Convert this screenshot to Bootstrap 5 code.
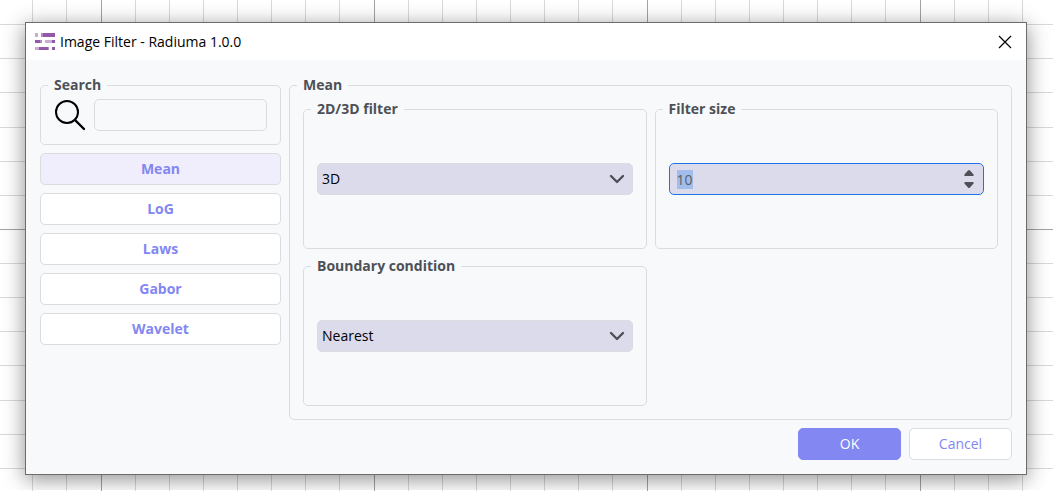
<!DOCTYPE html>
<html lang="en">
<head>
<meta charset="utf-8">
<meta name="viewport" content="width=device-width, initial-scale=1">
<title>Image Filter - Radiuma 1.0.0</title>
<link href="https://cdn.jsdelivr.net/npm/bootstrap@5.3.0/dist/css/bootstrap.min.css" rel="stylesheet">
<style>
  :root { --line: #dadce0; --panel: #f8f9fb; --accent: #8287f2; --ink: #4d5157; --field: #dcdbec; }
  body {
    font: 14px/20px "Open Sans", "Noto Sans", sans-serif;
    color: #000;
    background-color: #fff;
    /* canvas grid: a dark line every eight cells */
    background-image:
      linear-gradient(to right, #a3a3a3 1px, transparent 1px),
      linear-gradient(to bottom, #a3a3a3 1px, transparent 1px),
      repeating-linear-gradient(to right, transparent 0 33px, #d9d9d9 33px 34px),
      repeating-linear-gradient(to bottom, transparent 0 33px, #d9d9d9 33px 34px);
    background-size: 273px 273px;
    background-position: 101px 0, 0 229px, 68px 0, 0 94px;
  }
  .desk { padding: 22px 26px 15px 25px; }
  .dialog-win {
    background: var(--panel);
    border: 1px solid #6c6c6e;
    box-shadow: 0 4px 20px rgba(0, 0, 0, .45);
  }
  .title-strip { height: 37px; padding: 0 14px 0 9px; background: #fff; }
  .title-strip h1 { font-size: 14px; line-height: 20px; font-weight: 400; padding-left: 5px; }
  .close-btn { width: 14px; height: 14px; }
  .dialog-main { padding: 15px 14px 14px; }
  .side { flex: 0 0 241px; }
  .group {
    min-width: 0;
    border: 1px solid var(--line);
    border-radius: 5px;
    padding: 4px 13px 13px;
  }
  .group > legend {
    float: none;
    width: auto;
    margin: 0 0 0 -6px;
    padding: 0 6px;
    font-size: 14px;
    line-height: 20px;
    font-weight: 700;
    color: var(--ink);
  }
  .settings { display: grid; grid-template-columns: 1fr 1fr; gap: 7px 8px; }
  .slot { min-height: 112px; }
  .btn {
    --bs-btn-font-size: 14px;
    --bs-btn-line-height: 20px;
    --bs-btn-padding-y: 5px;
    --bs-btn-border-radius: 5px;
  }
  .btn-plain, .btn-accent { --bs-btn-color: var(--accent); --bs-btn-bg: #fff; --bs-btn-border-color: var(--line);
    --bs-btn-hover-color: var(--accent); --bs-btn-hover-bg: #f0eefd; --bs-btn-hover-border-color: var(--line);
    --bs-btn-active-color: var(--accent); --bs-btn-active-bg: #f0eefd; --bs-btn-active-border-color: var(--line); }
  .btn-accent { --bs-btn-color: #fff; --bs-btn-bg: var(--accent); --bs-btn-border-color: var(--accent);
    --bs-btn-hover-color: #fff; --bs-btn-hover-bg: #7378e8; --bs-btn-hover-border-color: #7378e8; }
  .side .btn { font-weight: 700; }
  .foot .btn { width: 103px; }
  .form-control, .form-select {
    height: 32px;
    font-size: 14px;
    line-height: 20px;
    border-color: var(--line);
    border-radius: 5px;
    padding: 5px 7px;
    background-color: var(--panel);
    color: var(--ink);
  }
  .form-select {
    padding-left: 4px;
    color: #000;
    background-color: var(--field);
    background-image: url("data:image/svg+xml,%3Csvg xmlns='http://www.w3.org/2000/svg' viewBox='0 0 16 16'%3E%3Cpath fill='none' stroke='%234d5157' stroke-width='2.400' stroke-linecap='round' stroke-linejoin='round' d='M2 5l6 6 6-6'/%3E%3C/svg%3E");
    background-size: 16px 16px;
    background-position: right 7px center;
  }
  .size-input, .size-input:focus {
    background-color: var(--field);
    border-color: #1a73e8;
    color: #5c6066;
    box-shadow: none;
    appearance: textfield;
  }
  .size-input::-webkit-inner-spin-button { appearance: none; margin: 0; }
  .size-input::selection { background: #a0bdec; color: #5c6066; }
  .steps { width: 10px; right: 10px; }
  .steps button { height: 12px; }
</style>
</head>
<body>
<div class="desk">
  <div class="dialog-win" role="dialog" aria-labelledby="win-title">
    <header class="title-strip d-flex align-items-center">
      <svg width="20" height="18" viewBox="0 0 20 18" aria-hidden="true">
        <g fill="#9359a8"><path d="M7 0h13v4H7zM0 7h7v3H0zM17 7h3v3h-3zM3 14h11v3H3zM17 14h3v3h-3z"/></g>
        <g fill="#c9add4"><path d="M0 0h3v4H0zM10 7h7v3h-7zM0 14h4v3H0z"/></g>
        <g fill="#b48cc3"><path d="M6 0h2v4H6zM5 7h2v3H5zM13 14h1v3h-1z"/></g>
      </svg>
      <h1 id="win-title" class="mb-0 flex-grow-1">Image Filter - Radiuma 1.0.0</h1>
      <button type="button" class="close-btn d-flex border-0 bg-transparent p-0" aria-label="Close">
        <svg width="14" height="14" viewBox="0 0 14 14"><path d="M1 1l12 12M13 1L1 13" stroke="#000" stroke-width="1.2"/></svg>
      </button>
    </header>
    <form class="dialog-main" onsubmit="return false">
      <div class="d-flex gap-2">
        <div class="side d-flex flex-column gap-2">
          <fieldset class="group">
            <legend>Search</legend>
            <div class="d-flex align-items-center gap-2">
              <label for="search" class="d-flex flex-shrink-0" aria-label="Search">
                <svg width="32" height="32" viewBox="0 0 32 32" fill="none" stroke="#000">
                  <circle cx="13" cy="13" r="11" stroke-width="2"/>
                  <path d="M21 21l9 9" stroke-width="2.4" stroke-linecap="round"/>
                </svg>
              </label>
              <input id="search" type="text" class="form-control">
            </div>
          </fieldset>
          <button type="button" class="btn btn-plain active" aria-pressed="true">Mean</button>
          <button type="button" class="btn btn-plain">LoG</button>
          <button type="button" class="btn btn-plain">Laws</button>
          <button type="button" class="btn btn-plain">Gabor</button>
          <button type="button" class="btn btn-plain">Wavelet</button>
        </div>
        <fieldset class="group flex-grow-1">
          <legend>Mean</legend>
          <div class="settings">
            <fieldset class="group">
              <legend>2D/3D filter</legend>
              <div class="slot d-flex align-items-center">
                <select class="form-select" aria-label="2D/3D filter"><option>3D</option><option>2D</option></select>
              </div>
            </fieldset>
            <fieldset class="group">
              <legend>Filter size</legend>
              <div class="slot d-flex align-items-center">
                <div class="position-relative w-100">
                  <input id="size" type="number" class="form-control size-input" value="10" aria-label="Filter size">
                  <div class="steps position-absolute top-0 bottom-0 d-flex flex-column justify-content-center">
                    <button type="button" class="d-flex align-items-center border-0 bg-transparent p-0" aria-label="Increase" onclick="size.stepUp()">
                      <svg width="10" height="6" viewBox="0 0 10 6"><path d="M5 0q.6 0 1 .5L9.600 4.500Q10 6 9 6H1Q0 6 .4 4.500L4 .5Q4.400 0 5 0z" fill="#4d5157"/></svg>
                    </button>
                    <button type="button" class="d-flex align-items-center border-0 bg-transparent p-0" aria-label="Decrease" onclick="size.stepDown()">
                      <svg width="10" height="6" viewBox="0 0 10 6"><path d="M5 6q.6 0 1-.5L9.600 1.500Q10 0 9 0H1Q0 0 .4 1.500L4 5.500Q4.400 6 5 6z" fill="#4d5157"/></svg>
                    </button>
                  </div>
                </div>
              </div>
            </fieldset>
            <fieldset class="group">
              <legend>Boundary condition</legend>
              <div class="slot d-flex align-items-center">
                <select class="form-select" aria-label="Boundary condition"><option>Nearest</option></select>
              </div>
            </fieldset>
          </div>
        </fieldset>
      </div>
      <div class="foot d-flex justify-content-end gap-2 mt-2">
        <button type="submit" class="btn btn-accent">OK</button>
        <button type="button" class="btn btn-plain">Cancel</button>
      </div>
    </form>
  </div>
</div>
<script src="https://cdn.jsdelivr.net/npm/bootstrap@5.3.0/dist/js/bootstrap.bundle.min.js"></script>
<script>
  const size = document.getElementById('size');
  size.focus();
  size.select();
</script>
</body>
</html>
